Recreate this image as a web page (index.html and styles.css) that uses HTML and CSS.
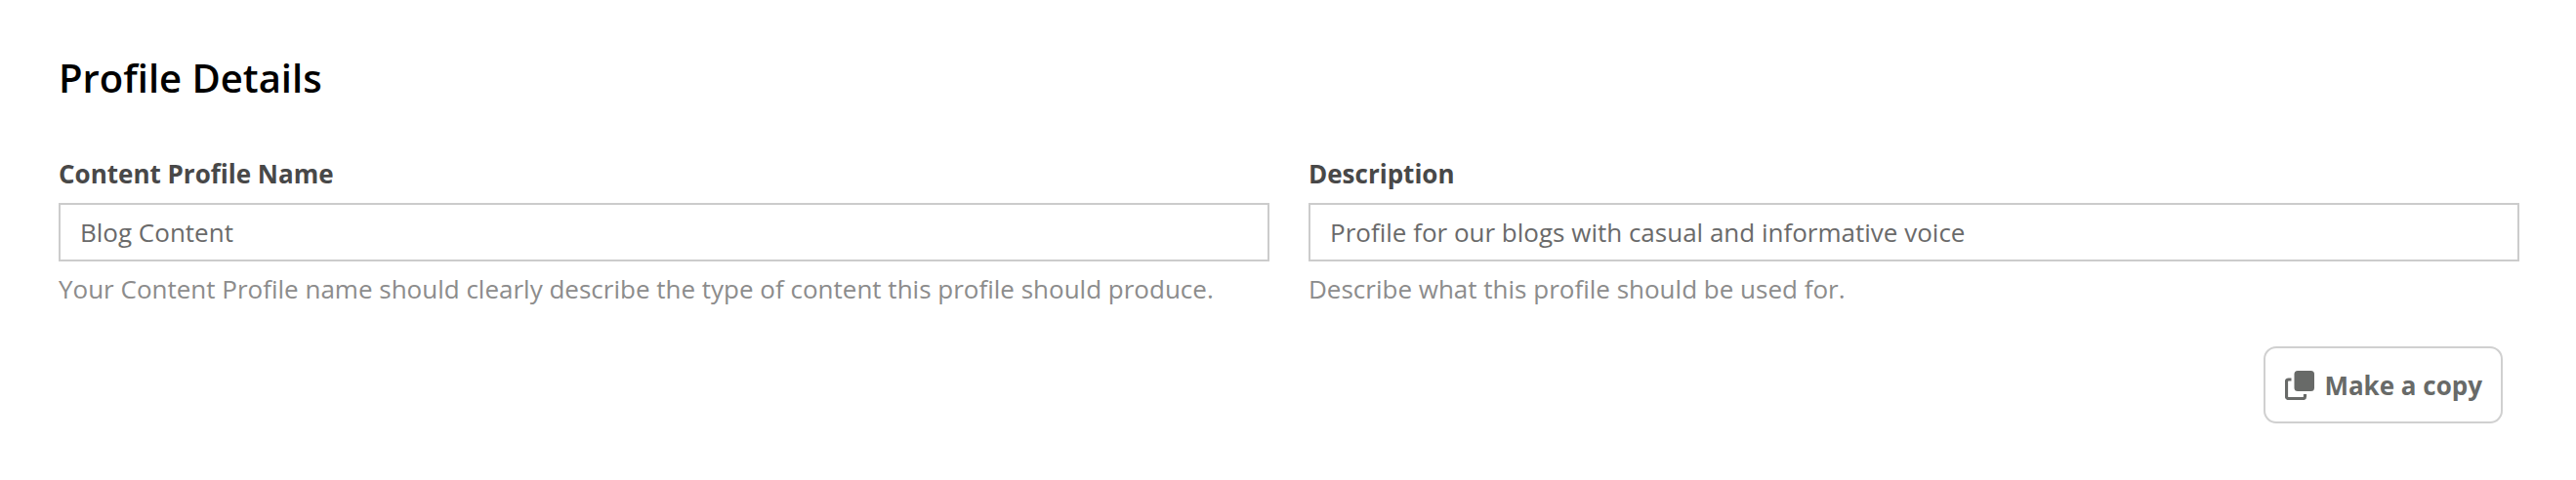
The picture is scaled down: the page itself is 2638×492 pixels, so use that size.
FILE: index.html
```html
<!DOCTYPE html>
<html lang="en">
<head>
    <meta charset="UTF-8">
    <title>Profile Details</title>
    <link rel="stylesheet" href="styles.css">
</head>
<body>
    <main class="profile-details">
        <h2 class="section-title">Profile Details</h2>
        <div class="field-row">
            <div class="field">
                <label class="field-label" for="profile-name">Content Profile Name</label>
                <input class="field-input" id="profile-name" type="text" value="Blog Content">
                <p class="field-help">Your Content Profile name should clearly describe the type of content this profile should produce.</p>
            </div>
            <div class="field">
                <label class="field-label" for="profile-description">Description</label>
                <input class="field-input" id="profile-description" type="text" value="Profile for our blogs with casual and informative voice">
                <p class="field-help">Describe what this profile should be used for.</p>
            </div>
        </div>
        <div class="actions">
            <button class="copy-button" type="button">
                <svg class="copy-icon" viewBox="0 0 30 30" aria-hidden="true">
                    <rect x="9.5" y="0" width="20.5" height="21" rx="3.5" fill="currentColor"/>
                    <path d="M6.5 9H3.5A2 2 0 0 0 1.5 11V26.5A2 2 0 0 0 3.5 28.5H18.5A2 2 0 0 0 20.5 26.5V24" fill="none" stroke="currentColor" stroke-width="3.2"/>
                </svg>
                Make a copy
            </button>
        </div>
    </main>
</body>
</html>
```
FILE: styles.css
```css
body {
    font-family: "Open Sans", sans-serif;
    margin: 0;
    padding: 0;
    background-color: #fff;
}

.profile-details {
    padding: 56px 58px 0 60px;
}

.section-title {
    font-size: 40px;
    font-weight: 600;
    line-height: 48px;
    margin: 0 0 56px;
    color: #000;
}

.field-row {
    display: grid;
    grid-template-columns: 1fr 1fr;
    gap: 40px;
}

.field-label {
    display: block;
    font-size: 26px;
    font-weight: 700;
    line-height: 36px;
    margin-bottom: 12px;
    color: #484848;
}

.field-input {
    display: block;
    box-sizing: border-box;
    width: 100%;
    height: 60px;
    padding: 0 20px;
    border: 2px solid #ccc;
    border-radius: 0;
    outline: none;
    font-family: inherit;
    font-size: 26px;
    color: #6a6a6a;
}

.field-help {
    font-size: 26px;
    line-height: 36px;
    margin: 10px 0 0;
    color: #8c8c8c;
}

.actions {
    display: flex;
    justify-content: flex-end;
    padding-right: 17px;
    margin-top: 41px;
}

.copy-button {
    display: flex;
    align-items: center;
    gap: 10px;
    box-sizing: border-box;
    height: 79px;
    padding: 0 19px 0 20px;
    border: 2px solid #d0d0d0;
    border-radius: 13px;
    background: #fff;
    font-family: inherit;
    font-size: 26px;
    font-weight: 700;
    color: #686a68;
}

.copy-icon {
    width: 30px;
    height: 30px;
}
```
